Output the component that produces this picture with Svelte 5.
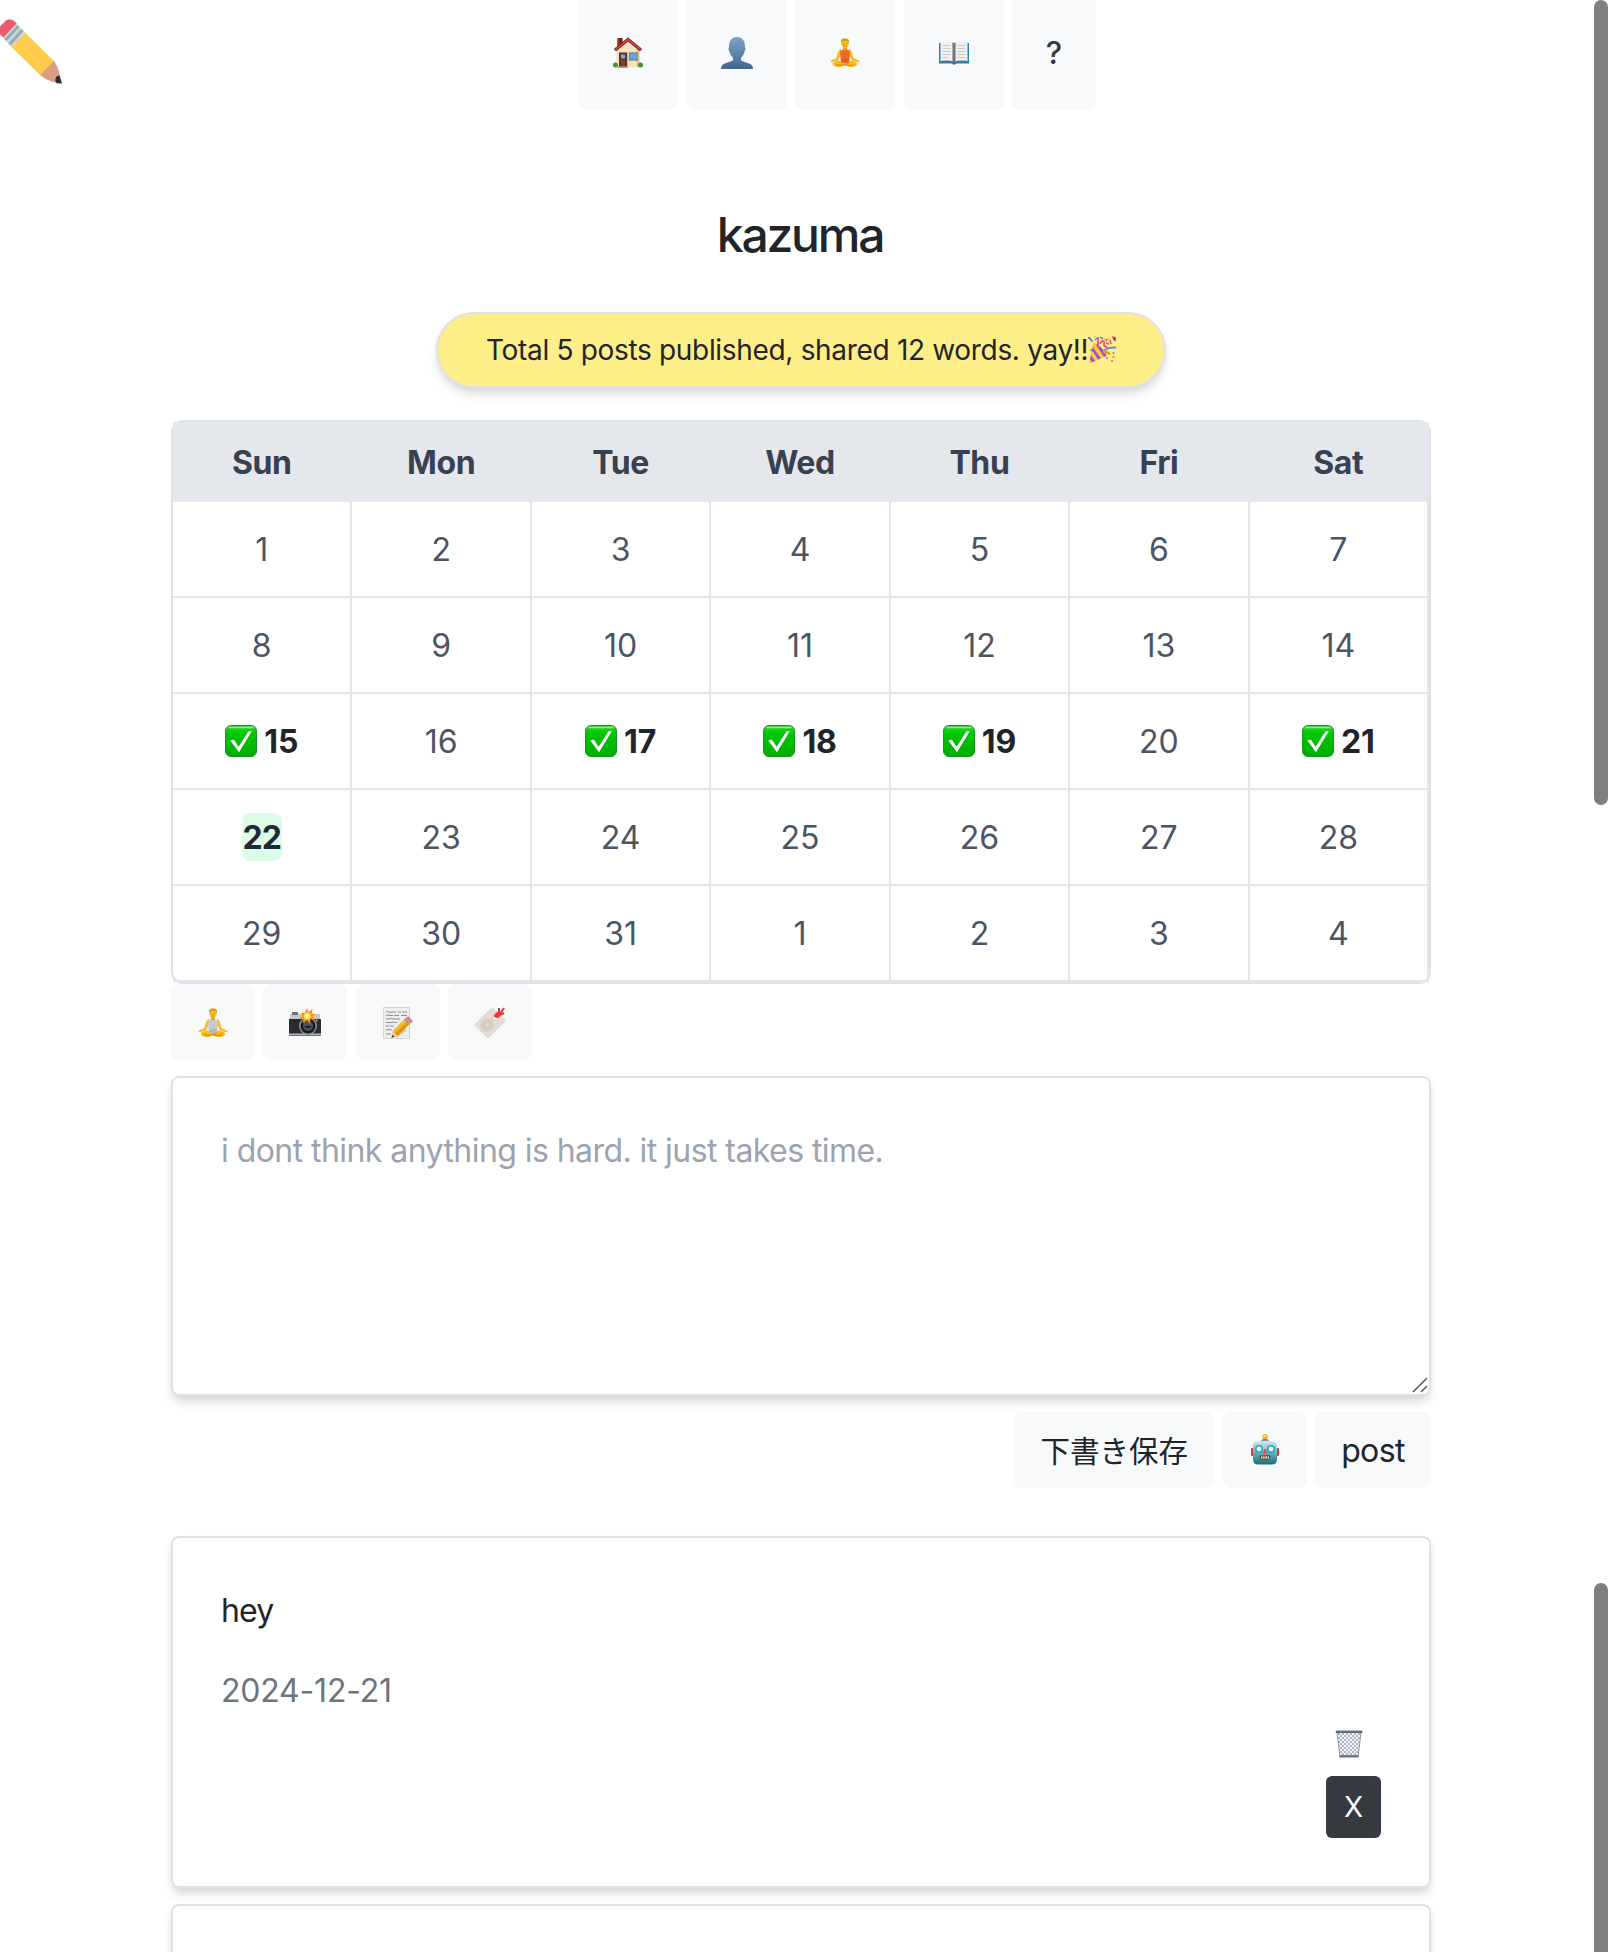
<script>
  const days = ['Sun', 'Mon', 'Tue', 'Wed', 'Thu', 'Fri', 'Sat'];
  const posted = [15, 17, 18, 19, 21];
  const today = 22;
  const cells = Array.from({ length: 35 }, (_, i) => {
    const day = i < 31 ? i + 1 : i - 30;
    return { day, done: i < 31 && posted.includes(day), today: i < 31 && day === today };
  });
</script>

{#snippet yoga(top, shade)}
  <svg class="icon" width="30" height="30" viewBox="0 0 30 30">
    <path d="M11 11c-3 1-3.500 5-4.500 9L1 22.500c-1 .6-.3 2 .8 1.700L8 22.500l3-7zM19 11c3 1 3.500 5 4.500 9l5.500 2.500c1 .6.3 2-.8 1.700L22 22.500l-3-7z" fill="#fbb91c" />
    <path d="M3.500 24.500C7 22 11 22.500 15 24c4-1.500 8-2 11.500.5 2 2-1 4.300-4 4.500-3 .2-5-.5-7.500-1.500C12.500 28.500 10.500 29.200 7.500 29c-3-.2-6-2.500-4-4.500z" fill="#fbb91c" />
    <path d="M6 26.500c5 1.200 9 .8 13-1.500M16 27.300c3 .5 6 .2 8.500-.8" stroke="#cf8510" stroke-width="1" fill="none" />
    <path d="M13 8h4v3.500l2.500 1 .5 4-1 7.500c-2.500 1-5.500 1-8 0l-1-7.500.5-4 2.500-1z" fill={top} />
    <path d="M11.500 20.500l-.5 3.500c2.500 1 5.500 1 8 0l-.5-3.500c-2 .8-5 .8-7 0z" fill={shade} />
    <path d="M13 8h4v3c-1 2-3 2-4 0z" fill="#f0a31a" />
    <ellipse cx="15" cy="5.500" rx="3.800" ry="4.600" fill="#ffc928" />
    <path d="M11 5c-.5-4 1.500-4.800 4-4.500 3-.4 4.600 1 4 4.500-1-2-6.500-2.500-8 0z" fill="#dca00e" />
    <path d="M12.800 5.700h1.500M15.700 5.700h1.500M13.800 8h2.400" stroke="#7b4b12" stroke-width=".7" />
  </svg>
{/snippet}

<svg class="pencil" width="62" height="66" viewBox="0 18 62 66">
  <path d="M0 26.500L5 21.500C8 18.800 12 19 15 22l2 2L4 38l-4-3.500z" fill="#ea596e" />
  <path d="M16.500 23.500l9 9.500-13.500 14.500-9-9.500z" fill="#ccd6dd" />
  <path d="M18.500 26L5.500 40M22.500 30L9.500 44.500" stroke="#99aab5" stroke-width="3" />
  <path d="M25.500 33L54 61l-1.500 7-7 7.500-5.500-.5L11.500 47z" fill="#ffcc4d" />
  <path d="M54 61c4 6 5.500 11 6.500 19l-3 3c-6-1-12-3.500-17.500-8z" fill="#d99e82" />
  <path d="M59.500 75.500L62 83.500l-5-.2c-3-2-2-7.500 2.500-7.800z" fill="#292f33" />
</svg>

<nav class="nav">
  <button class="btn" aria-label="Home">
    <svg class="icon" width="30" height="31" viewBox="0 0 30 31">
      <path d="M4.500 1h5v8h-5z" fill="#6d1e1b" /><path d="M4.500 1h2v9h-2z" fill="#a9362e" />
      <path d="M3.500 13L15 3l11.500 10v17.300h-23z" fill="#f6e2bd" />
      <path d="M23.500 11l3 2v17.300h-3z" fill="#dfc397" />
      <path d="M2 13L15 2.500 28 13" stroke="#292524" stroke-width="3" fill="none" />
      <path d="M2.500 12.300L15 2.500l12.500 9.800" stroke="#e43b34" stroke-width="2" fill="none" />
      <path d="M6 15.500h8.200V30.500H6z" fill="#63301e" /><path d="M8 17.500h4v4H8z" fill="#58b9ef" /><path d="M8 23h4v6H8z" fill="#7d402a" />
      <path d="M15.800 15.300h9v8.400h-9z" fill="#8e8275" /><path d="M17 16.700h6.600v5.700H17z" fill="#58a9dc" />
      <circle cx="2.500" cy="28" r="2.500" fill="#4f8b31" /><circle cx="27.500" cy="28" r="2.500" fill="#4f8b31" />
      <path d="M5 29.300h10V31H5z" fill="#a39a90" />
    </svg>
  </button>
  <button class="btn" aria-label="Profile">
    <svg class="icon" width="32" height="32" viewBox="0 0 32 32">
      <defs><linearGradient id="bust" x2="0" y2="1"><stop stop-color="#7ba5c9" /><stop offset="1" stop-color="#43658c" /></linearGradient></defs>
      <path d="M16 0c5.500 0 8.200 4 8 10.500.8.300.8 2.500-.4 3.800-.6 3-2 5-3.600 6.400v2.300c1 2 9 2.500 11 5.500.8 1.200.9 2.300 1 3.500H0c.1-1.200.2-2.300 1-3.500 2-3 10-3.500 11-5.500v-2.300c-1.600-1.400-3-3.400-3.600-6.400C7.200 13 7.200 10.800 8 10.500 7.800 4 10.500 0 16 0z" fill="url(#bust)" />
    </svg>
  </button>
  <button class="btn" aria-label="Meditate">{@render yoga('#ee6b25', '#e85d1c')}</button>
  <button class="btn" aria-label="Read">
    <svg class="icon" width="30" height="24" viewBox="0 0 30 24">
      <path d="M0 2h30v20.500H17.500c-1 1.500-4 1.500-5 0H0z" fill="#2c80ac" />
      <path d="M1.500 1C6 .3 11 0 15 2v19.500c-4-1.600-9-1.600-13.500-.8zM28.500 1C24 .3 19 0 15 2v19.500c4-1.600 9-1.600 13.500-.8z" fill="#f0eff1" />
      <path d="M13 1.200l2 .8 2-.8v19.500l-2 .8-2-.8z" fill="#a9a8ad" /><path d="M14.500 2h1v20h-1z" fill="#4c4b50" />
      <path d="M3.500 4.500h8M3.500 7.500h8M3.500 10.500h8M3.500 13.500h8M3.500 16.500h6M18.500 4.500h8M18.500 7.500h8M18.500 10.500h8M18.500 13.500h8M18.500 16.500h8" stroke="#c9c8cf" stroke-width="1" />
      <path d="M1.500 20.700c4-.8 9-.8 13.500.8 4.500-1.600 9.500-1.600 13.500-.8" stroke="#66656c" stroke-width="1.200" fill="none" />
    </svg>
  </button>
  <button class="btn help">?</button>
</nav>

<main>
  <h1>kazuma</h1>

  <p class="banner">
    <span>Total 5 posts published, shared 12 words. yay!!</span>
    <svg class="icon" width="28" height="28" viewBox="0 0 28 28">
      <path d="M1 27.500L5.500 7c5 1 11 7 13 13z" fill="#f7bd34" />
      <path d="M4.700 11l8 11.300-3 1.500-6-8.500zM7.500 8l8.500 13 2.500-1C16 14 12 9.500 7.500 8zM2.700 19.500l4.500 5.500-2.800 1.200-2.500-3z" fill="#9a4fd0" />
      <path d="M8 12l6 9M4 16l5 8" stroke="#fbd04a" stroke-width="2.200" />
      <path d="M11 12c-2-4-.5-7-1-11M12 8c2-5 5-3 4 0s3 2 4 5" stroke="#ef4a80" stroke-width="1.700" fill="none" />
      <path d="M15 15c4-3 7-4 13-3.500" stroke="#4b94e4" stroke-width="2" fill="none" />
      <path d="M0 2c4-1 1 3 5 3M12 1l3 2" stroke="#4274c8" stroke-width="1.500" fill="none" />
      <path d="M15 16c3-1 4 2 7 1" stroke="#e99b1c" stroke-width="3" fill="none" />
      <path d="M18 7l3 1M22 4l1 4M24 1l4 1-1 3M23 25h2M17 3l2 2" stroke="#e8557d" stroke-width="1.700" />
      <path d="M2 14h2M18 22h2M25 16l1 2M9 2l-2 2" stroke="#5a86d6" stroke-width="1.500" />
      <path d="M20 2v2M24 21h3M6 0l1 1" stroke="#eab644" stroke-width="2" />
    </svg>
  </p>

  <section class="calendar">
    {#each days as name}<div class="head">{name}</div>{/each}
    {#each cells as cell}
      <div class="cell" class:done={cell.done}>
        {#if cell.done}
          <svg class="check" width="32" height="32" viewBox="0 0 32 32">
            <defs><linearGradient id="green" x2="0" y2="1"><stop stop-color="#3ed23c" /><stop offset=".25" stop-color="#00c805" /><stop offset="1" stop-color="#00ad00" /></linearGradient></defs>
            <rect x=".5" y=".5" width="31" height="31" rx="5.500" fill="url(#green)" stroke="#16972a" />
            <path d="M4 2.500h24" stroke="#8ee58c" stroke-width="1.500" stroke-linecap="round" />
            <path d="M5.300 15.500l3.500-1 4.800 7.200L23.500 6.300h3.300L14 27.300z" fill="#fff" />
          </svg>
        {/if}
        <span class="day" class:today={cell.today}>{cell.day}</span>
      </div>
    {/each}
  </section>

  <div class="tools">
    <button class="btn" aria-label="Meditation">{@render yoga('#c9cad0', '#b5b7bf')}</button>
    <button class="btn" aria-label="Photo">
      <svg class="icon" width="32" height="30" viewBox="0 0 32 30">
        <path d="M1 6h30v6H1z" fill="#c5c7c9" /><path d="M3 4h6v3H3z" fill="#6f7376" />
        <path d="M0 11h32v16q0 1-1 1H1q-1 0-1-1z" fill="#2b2b2d" /><path d="M0 25.500h32v2H0z" fill="#b4b6b8" />
        <circle cx="19" cy="18" r="9" fill="#8c9196" /><circle cx="19" cy="18" r="7.500" fill="#1b1c1f" />
        <circle cx="19" cy="18" r="5" fill="#4a525d" /><path d="M15.500 18q3.500 4 7 0z" fill="#12151a" />
        <path d="M18 0l1.500 4 4-3-.5 4.500 3.500.5-3 2.500 2 3-4-.5-.5 5-3-3.800-4 3.300.5-4.500-4-.5 3-3-2-3 4 .5z" fill="#ff9213" />
        <circle cx="18.300" cy="8" r="3.500" fill="#ffe34c" /><circle cx="18.300" cy="8" r="1.500" fill="#fff" /><circle cx="27.500" cy="12.500" r="1" fill="#e7b931" />
      </svg>
    </button>
    <button class="btn" aria-label="Write">
      <svg class="icon" width="30" height="32" viewBox="0 0 30 32">
        <path d="M.5.500h26v31H.5z" fill="#eeeeee" stroke="#d4d4d4" />
        <path d="M3 5q2-1 3 0t3 0h4m2 0h3m1 0h5M3 8.500q2-1 3 0h4m1 0h5m2 0h6M3 12h3q2-1 3 0h8M3 15.500h6q1-1 2 0h3M3 19h3m1 0h4M3 23q3-1 6 0M3 27h5" stroke="#8c8c8c" stroke-width="1" fill="none" />
        <path d="M9 28.500l5 1.800 9-6V18z" fill="#cbcbcb" />
        <path d="M9.500 24L21.500 12l5 5-12 12z" fill="#f5bd24" /><path d="M12 26.500L24 14.500l2.500 2.500-12 12z" fill="#d99811" />
        <path d="M9.500 24l5 5-5.500 1.500z" fill="#e8c391" /><path d="M8.500 30.700l.6-2.700 2.200 1.800z" fill="#333" />
        <path d="M20.800 12.700l2-2 5 5-2 2z" fill="#9ba1a8" /><path d="M22.500 11q1.500-2 3-1.500l4 4q.5 1.500-1.500 3z" fill="#ef7386" />
      </svg>
    </button>
    <button class="btn" aria-label="Tag">
      <svg class="icon" width="32" height="32" viewBox="0 0 32 32">
        <path d="M0 18L17 .8q1-.5 2 0l12 11.700q.7 1.500 0 2.500L14.500 31.500h-1z" fill="#e3dcd4" />
        <g stroke="#c8c0b6" stroke-width=".9"><path d="M13 11v14M6 18h14M8 13l10 10M18 13L8 23M10.300 11.600l5.400 12.800M15.700 11.600l-5.400 12.800M6.600 15.300l12.800 5.400M6.600 20.700l12.800-5.400" /></g>
        <circle cx="13" cy="18" r="2" fill="#e3dcd4" /><circle cx="21.500" cy="10.500" r="3" fill="#f9f6f2" stroke="#c9beb5" />
        <path d="M21.500 10.500l3-5M24 9l6-3M25 7V1M26 7l4-6M21 9q2-4 4-2t-2 3z" stroke="#e4393e" stroke-width="2" fill="#e4393e" />
      </svg>
    </button>
  </div>

  <div class="editor">
    <textarea placeholder="i dont think anything is hard. it just takes time."></textarea>
    <svg class="grip" width="16" height="16" viewBox="0 0 16 16"><path d="M1 15L15 1M9 15l6-6" stroke="#555" stroke-width="1.500" /></svg>
  </div>

  <div class="actions">
    <button class="btn draft">下書き保存</button>
    <button class="btn" aria-label="Assistant">
      <svg class="icon robot" width="28" height="31" viewBox="0 0 28 31">
        <defs><linearGradient id="robot" x2="0" y2="1"><stop stop-color="#d7eeee" /><stop offset=".45" stop-color="#7db6bc" /><stop offset="1" stop-color="#176e7d" /></linearGradient></defs>
        <rect y="14" width="4" height="8" rx="1" fill="#d53f38" /><rect x="24" y="14" width="4" height="8" rx="1" fill="#d53f38" />
        <path d="M10 8q0-3 4-3t4 3z" fill="#65458c" /><circle cx="14" cy="2.700" r="2.700" fill="#fdad22" /><circle cx="13.500" cy="2" r="1.200" fill="#ffe58f" />
        <path d="M5 7.500Q14 5.500 23 7.500q3 1 3 5V25q0 5.500-5 5.500H7Q2 30.500 2 25V12.500q0-4 3-5z" fill="url(#robot)" />
        <circle cx="8" cy="15" r="3.200" fill="#fff" stroke="#16acd0" stroke-width="1.600" /><circle cx="20" cy="15" r="3.200" fill="#fff" stroke="#16acd0" stroke-width="1.600" />
        <path d="M14 14.500l2.500 5h-5z" fill="#ee4c45" /><path d="M8.500 21.500h11l-1 4h-9z" fill="#44332e" /><path d="M10 23.500h8.500" stroke="#f4f1e8" stroke-width="2.500" stroke-dasharray="1.400 .8" />
      </svg>
    </button>
    <button class="btn post">post</button>
  </div>

  <article class="card">
    <p>hey</p>
    <p class="date">2024-12-21</p>
    <div class="controls">
      <svg class="trash" width="28" height="28" viewBox="0 0 28 28">
        <defs><pattern id="mesh" width="4" height="4" patternUnits="userSpaceOnUse"><path d="M0 0l4 4M4 0L0 4" stroke="#8d959f" stroke-width=".7" /></pattern></defs>
        <path d="M2 2.500h24L23 27H5z" fill="#f5f7f8" /><path d="M2 2.500h24L23 27H5z" fill="url(#mesh)" />
        <path d="M2 2.500L5 27M26 2.500L23 27" stroke="#8d959e" />
        <path d="M.8 1.800h26.400" stroke="#4e5763" stroke-width="2.200" /><path d="M3 .8h22" stroke="#a6b8cc" stroke-width="1" />
        <path d="M4.500 26.300h19" stroke="#63758a" stroke-width="2.400" />
      </svg>
      <button class="close">X</button>
    </div>
  </article>

  <article class="card next"></article>
</main>

<div class="bar upper"></div>
<div class="bar lower"></div>

<style>
  :global(body) { background: #fff; overflow: hidden; }
  :global(#app) {
    position: relative;
    height: 1952px;
    overflow: hidden;
    color: #212529;
    font: 400 32px/48px Inter, "Noto Sans CJK JP", sans-serif;
  }
  .pencil { position: absolute; left: 0; top: 18px; }
  .icon, .check, .trash { display: block; flex: none; }
  .nav { display: flex; gap: 8.500px; margin-left: 578px; }
  .nav .btn { width: 100px; height: 110px; padding-bottom: 5px; border-radius: 0 0 8px 8px; }
  .nav .help { width: 84px; padding-bottom: 4px; font-weight: 500; font-size: 31px; color: #343a40; }
  .btn {
    display: flex; align-items: center; justify-content: center;
    box-sizing: border-box; width: 84px; height: 76px; padding: 0;
    border: 0; border-radius: 8px; background: #f8f9fb; color: #212529;
    font: inherit; white-space: nowrap;
  }
  main { width: 1260px; margin-left: 171px; }
  h1 { margin: 96px 0 48px; text-align: center; font-size: 48px; line-height: 58px; font-weight: 500; letter-spacing: -2.200px; text-indent: -2px; }
  .banner {
    display: flex; align-items: center; justify-content: space-between;
    box-sizing: border-box; width: 730px; height: 76px; margin: 0 auto 32px; padding: 0 48px;
    border: 2px solid #dee2e6; border-radius: 38px; background: #feee87;
    font-size: 28px; letter-spacing: -0.320px; white-space: nowrap;
    box-shadow: 0 8px 12px -2px rgb(0 0 0 / .1), 0 4px 8px -2px rgb(0 0 0 / .1);
  }
  .calendar {
    display: grid; grid-template-columns: repeat(7, 1fr); grid-template-rows: 80px repeat(5, 96px);
    border: 2px solid #dee2e6; border-radius: 12px;
  }
  .head { padding-right: 2px; background: #e4e7eb; color: #374151; font-weight: 700; line-height: 82px; height: 80px; text-align: center; letter-spacing: -0.4px; }
  .cell {
    display: flex; align-items: center; justify-content: center; gap: 7px;
    border: solid #e2e5e9; border-width: 0 2px 2px 0; color: #4b5563;
  }
  .day { height: 48px; line-height: 50px; }
  .done { color: #212529; font-weight: 700; letter-spacing: -0.200px; }
  .today { padding: 0 1px; border-radius: 8px; background: #dcfce7; color: #1f2937; font-weight: 700; letter-spacing: -1px; }
  .tools { display: flex; gap: 8.400px; }
  .tools .btn { padding-top: 1px; }
  .editor { position: relative; margin-top: 16px; height: 320px; }
  textarea {
    display: block; box-sizing: border-box; width: 100%; height: 100%; padding: 49px 48px 47px; resize: none;
    border: 2px solid #dee2e6; border-radius: 8px; background: #fff; outline: 0; color: inherit;
    font: inherit; letter-spacing: -0.560px;
    box-shadow: 0 8px 12px -2px rgb(0 0 0 / .1), 0 4px 8px -2px rgb(0 0 0 / .1);
  }
  textarea::placeholder { color: #9ca3af; opacity: 1; }
  .grip { position: absolute; right: 3px; bottom: 3px; }
  .actions { position: relative; display: flex; justify-content: flex-end; gap: 8.400px; margin-top: 16px; }
  .actions .btn { padding-top: 2px; }
  .actions .draft { width: 200px; font-size: 29.500px; }
  .actions .robot { margin-top: -3px; }
  .actions .post { width: 116px; letter-spacing: -0.600px; }
  .card {
    box-sizing: border-box; height: 352px; margin-top: 48px; padding: 48px;
    border: 2px solid #dee2e6; border-radius: 8px; background: #fff;
    box-shadow: 0 8px 12px -2px rgb(0 0 0 / .1), 0 4px 8px -2px rgb(0 0 0 / .1);
  }
  .card.next { margin-top: 16px; }
  .card p { height: 48px; margin: 0 0 32px; line-height: 50px; letter-spacing: -0.800px; }
  .card .date { margin: 0; color: #6c757d; letter-spacing: -0.200px; }
  .controls { display: flex; flex-direction: column; align-items: flex-end; padding-top: 16px; }
  .trash { margin: 0 18px 18px 0; }
  .close {
    width: 55px; height: 62px; padding: 0; border: 0; border-radius: 6px;
    background: #343a40; color: #fff; font: inherit; font-size: 28px;
  }
  .bar { position: absolute; right: 2px; width: 14px; background: #7f7f7f; }
  .upper { top: 0; height: 805px; border-radius: 7px; }
  .lower { top: 1583px; height: 380px; border-radius: 7px 7px 0 0; }
</style>
